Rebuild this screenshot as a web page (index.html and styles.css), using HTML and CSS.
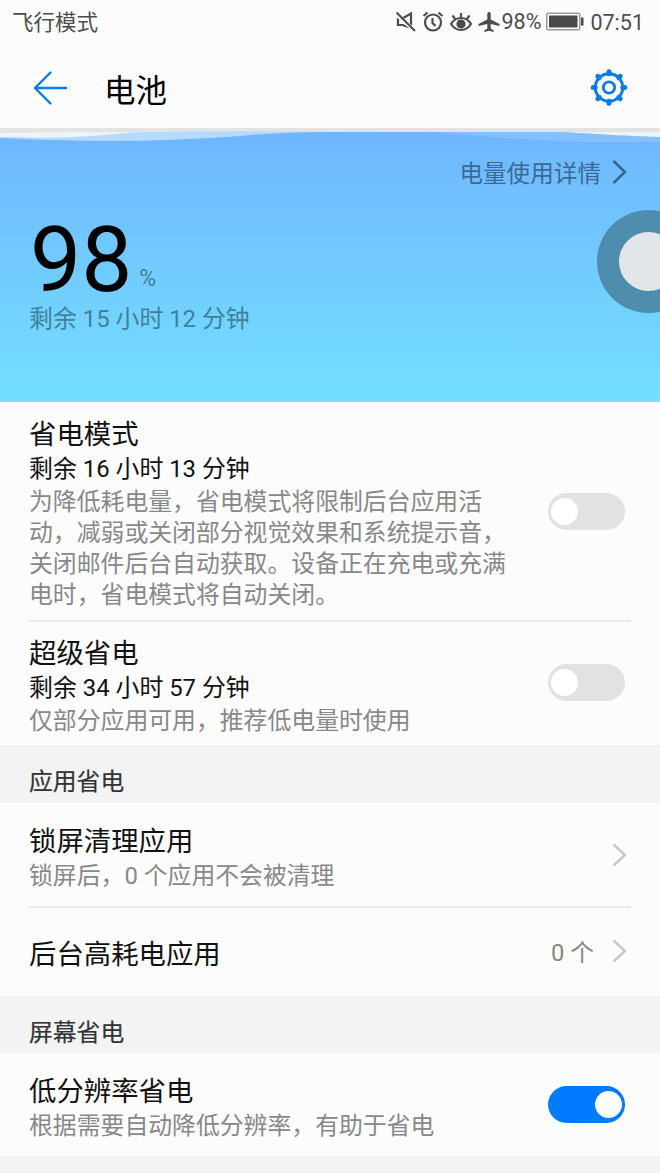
FILE: index.html
```html
<!DOCTYPE html>
<html lang="zh-CN">
<head>
<meta charset="utf-8">
<title>电池</title>
<link rel="stylesheet" href="styles.css">
</head>
<body>
<div class="screen">
  <div class="status">
    <span class="carrier">飞行模式</span>
    <div class="status-icons">
      <svg width="22" height="22" viewBox="0 0 22 22" fill="none" stroke="#4d4d4d" stroke-width="2.200"><path d="M3 7.500h4.500L16 2.500v14.500L7.500 14H3z"/><path d="M0 2l20 18" stroke="#fcfcfc" stroke-width="4"/><path d="M1.500 1.500l18.500 18.500"/></svg>
      <svg width="22" height="22" viewBox="0 0 22 22" fill="none" stroke="#4d4d4d" stroke-width="2.200"><circle cx="11" cy="11.500" r="8"/><path d="M10.500 7v5l3 3M1.500 5L5.500 1.500M20.500 5L16.500 1.500"/></svg>
      <svg width="24" height="22" viewBox="0 0 24 22" fill="none" stroke="#4d4d4d" stroke-width="2.200"><path d="M2 13c5-8 15-8 20 0-5 8-15 8-20 0zM12 2v5M3.500 4.500l3 4M20.500 4.500l-3 4"/><circle cx="12" cy="13" r="3.500" fill="#4d4d4d"/></svg>
      <svg width="22" height="22" viewBox="0 0 22 22" fill="#4d4d4d"><path d="M11 1c1.200 0 1.700 1 1.700 2.200V8.500L21.500 13v2l-8.800-2v4.500l3 1.900V21L11 19.800 6.300 21v-1.600l3-1.900V13L.5 15v-2l8.800-4.500V3.200C9.300 2 9.800 1 11 1z"/></svg>
      <span class="pct">98%</span>
      <svg class="batt" width="38" height="20" viewBox="0 0 38 20"><rect x="0.750" y="1.250" width="33" height="16.500" rx="1.500" fill="none" stroke="#999" stroke-width="1.500"/><rect x="3" y="3.500" width="28.500" height="12" fill="#4a4a4a"/><rect x="35" y="5.500" width="2.500" height="8" fill="#4a4a4a"/></svg>
      <span class="time">07:51</span>
    </div>
  </div>
  <header class="header">
    <svg class="back" width="36" height="36" viewBox="0 0 36 36" fill="none" stroke="#0a7bea" stroke-width="2.400" stroke-linecap="round" stroke-linejoin="round"><path d="M34 18H3M18.500 2.500L3 18l15.500 15.500"/></svg>
    <h1>电池</h1>
    <svg class="gear" width="38" height="38" viewBox="0 0 38 38" fill="none" stroke="#0a7bea"><circle cx="19" cy="18.500" r="13.700" stroke-width="3"/><circle cx="19" cy="18.500" r="5.700" stroke-width="2.800"/><path d="M19 2.700v2M19 32.300v2M3.200 18.500h2M32.800 18.500h2M7.800 7.300l1.400 1.400M28.800 28.300l1.400 1.400M7.800 29.700l1.400-1.400M28.800 8.700l1.400-1.400" stroke-width="5" stroke-linecap="round"/></svg>
  </header>
  <section class="hero">
    <svg class="waves" width="660" height="16" viewBox="0 0 660 16"><rect width="660" height="5" fill="#e3e3e3"/><path d="M0 9Q65 11 115 5Q200 2 330 4Q560 3 660 8V14H0z" fill="#b4dbff"/><path d="M0 5Q20 4 135 4Q70 12 0 9zM565 4H660V9Q620 8 565 4z" fill="#edf4fb"/><path d="M430 4H565Q620 8 660 9V14H430z" fill="#84c0ff"/><path d="M0 10Q120 17 240 8Q280 4 320 4H430Q510 11 580 14H660V16H0z" fill="#70b6ff"/></svg>
    <a class="details"><span>电量使用详情</span><svg width="15" height="26" viewBox="0 0 15 26" fill="none" stroke="#35668f" stroke-width="2.500"><path d="M1.500 2L13 13 1.500 24"/></svg></a>
    <div class="level"><span class="number">98</span><span class="unit">%</span></div>
    <p class="remain">剩余 15 小时 12 分钟</p>
    <div class="float-ball"><i></i></div>
  </section>
  <section class="row mode">
    <div class="copy"><h2>省电模式</h2><p class="left">剩余 16 小时 13 分钟</p><p class="desc long">为降低耗电量，省电模式将限制后台应用活<br>动，减弱或关闭部分视觉效果和系统提示音，<br>关闭邮件后台自动获取。设备正在充电或充满<br>电时，省电模式将自动关闭。</p></div>
    <span class="switch"></span>
  </section>
  <section class="row ultra ruled">
    <div class="copy"><h2>超级省电</h2><p class="left">剩余 34 小时 57 分钟</p><p class="desc">仅部分应用可用，推荐低电量时使用</p></div>
    <span class="switch"></span>
  </section>
  <h3 class="group">应用省电</h3>
  <section class="row lock">
    <div class="copy"><h2>锁屏清理应用</h2><p class="desc">锁屏后，0 个应用不会被清理</p></div>
    <svg class="chev" width="15" height="26" viewBox="0 0 15 26"><path d="M1.500 2.500L13 13 1.500 23.500"/></svg>
  </section>
  <section class="row heavy ruled">
    <div class="copy"><h2>后台高耗电应用</h2></div>
    <span class="value">0 个</span>
    <svg class="chev" width="15" height="26" viewBox="0 0 15 26"><path d="M1.500 2.500L13 13 1.500 23.500"/></svg>
  </section>
  <h3 class="group second">屏幕省电</h3>
  <section class="row lowres">
    <div class="copy"><h2>低分辨率省电</h2><p class="desc">根据需要自动降低分辨率，有助于省电</p></div>
    <span class="switch on"></span>
  </section>
  <div class="tail"></div>
</div>
</body>
</html>
```
FILE: styles.css
```css
* { box-sizing: border-box; margin: 0; padding: 0; }
body { font-family: Roboto, "Noto Sans CJK SC", sans-serif; background: #fcfcfc; color: #111; }
.screen { width: 660px; height: 1173px; overflow: hidden; display: flex; flex-direction: column; }
h1, h2, h3 { font-weight: 400; }
.status { height: 44px; padding: 0 16px 0 12px; display: flex; align-items: center; justify-content: space-between; color: #4d4d4d; }
.carrier { font-size: 21.5px; line-height: 30px; padding-top: 2px; }
.status-icons { display: flex; align-items: center; }
.status-icons svg { margin-right: 5px; }
.status-icons svg:nth-child(4) { margin-right: 2px; }
.status-icons .batt { margin-right: 6px; }
.pct { font-size: 21.5px; line-height: 30px; margin-right: 5px; }
.time { font-size: 21.5px; line-height: 30px; padding-top: 2px; }
.header { height: 84px; display: flex; align-items: center; padding: 3px 32px 0 32px; }
.header h1 { font-size: 31.5px; line-height: 44px; margin-left: 36px; padding-top: 9px; flex: 1; color: #000; }
.hero { position: relative; overflow: hidden; height: 274px; background: linear-gradient(#70b6ff, #73dfff); display: flex; flex-direction: column; }
.waves { display: block; }
.details { height: 56px; display: flex; justify-content: flex-end; align-items: center; gap: 11px; padding-right: 33px; color: #3c6993; font-size: 23.6px; }
.level { height: 104px; padding: 14px 0 0 30px; display: flex; align-items: flex-start; }
.number { font-size: 91px; line-height: 90px; padding-top: 1px; color: #000; }
.unit { font-size: 23px; line-height: 28px; color: #40809c; margin: 51px 0 0 7px; }
.remain { font-size: 23.9px; line-height: 30px; padding-left: 29px; color: #40809c; }
.float-ball { position: absolute; left: 597px; top: 82px; width: 103px; height: 103px; border-radius: 50%; background: #4f8daf; }
.float-ball i { position: absolute; left: 22px; top: 22px; width: 59px; height: 59px; border-radius: 50%; background: #e2e6ea; }
.row { display: flex; align-items: center; padding: 0 35px 0 29px; position: relative; }
.copy { flex: 1; padding-top: 6px; }
.row h2 { font-size: 27.4px; line-height: 36px; }
.left { font-size: 23.9px; line-height: 33px; color: #111; }
.desc { font-size: 23.85px; line-height: 32px; color: #888; white-space: nowrap; }
.long { line-height: 31.2px; padding-top: 1px; }
.ruled::before { content: ""; position: absolute; left: 29px; right: 29px; top: 0; height: 2px; background: #ebebeb; }
.mode { height: 218px; }
.ultra { height: 125px; }
.ultra .copy { padding-top: 7px; }
.lock { height: 103px; }
.lock .chev, .heavy .chev { margin-right: -2px; }
.heavy { height: 90px; }
.heavy .copy { padding-top: 7px; }
.value { font-size: 23.8px; color: #858585; margin-right: 18px; padding-bottom: 2px; }
.chev { fill: none; stroke: #c8c8c8; stroke-width: 2.5; }
.switch { width: 77px; height: 37px; border-radius: 19px; background: #e2e2e2; padding: 5px 3px; display: flex; }
.switch::after { content: ""; width: 27px; height: 27px; border-radius: 50%; background: #fff; }
.switch.on { background: #007aff; justify-content: flex-end; }
.group { height: 58px; padding: 16px 29px 0; font-size: 23.8px; line-height: 42px; background: #f3f3f3; color: #333; -webkit-text-stroke: 0.2px #333; }
.group { line-height: 43px; }
.second { height: 57px; }
.lowres { height: 103px; }
.tail { flex: 1; background: #f3f3f3; }
```
